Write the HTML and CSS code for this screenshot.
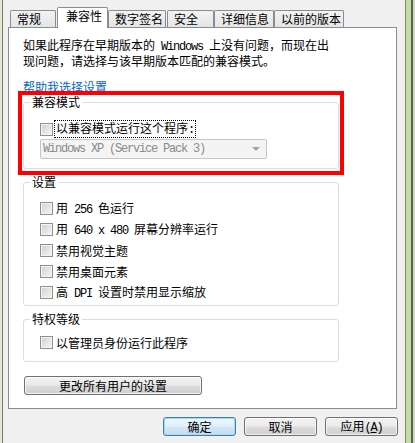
FILE: index.html
```html
<!DOCTYPE html>
<html lang="zh-CN">
<head>
<meta charset="utf-8">
<title>属性 - 兼容性</title>
<link rel="stylesheet" href="styles.css">
</head>
<body>
<div class="win">
  <div class="frame-l"></div>
  <div class="main">
    <div class="tabs">
      <div class="tab t1">常规</div>
      <div class="tab sel t2">兼容性</div>
      <div class="tab t3">数字签名</div>
      <div class="tab t4">安全</div>
      <div class="tab t5">详细信息</div>
      <div class="tab t6">以前的版本</div>
    </div>
    <div class="panel">
      <p class="desc">如果此程序在早期版本的<span class="m"> Windows </span>上没有问题，而现在出<br>现问题，请选择与该早期版本匹配的兼容模式。</p>
      <a class="link">帮助我选择设置</a>
      <fieldset class="group g1">
        <legend>兼容模式</legend>
        <div class="gbody">
          <div class="row r16"><span class="cb"></span><span class="focus">以兼容模式运行这个程序<span class="m">:</span></span></div>
          <div class="select"><span class="m">Windows XP (Service Pack 3)</span><span class="arrow"></span></div>
        </div>
      </fieldset>
      <fieldset class="group g2">
        <legend>设置</legend>
        <div class="gbody">
          <div class="row"><span class="cb"></span><span>用<span class="m"> 256 </span>色运行</span></div>
          <div class="row"><span class="cb"></span><span>用<span class="m"> 640 x 480 </span>屏幕分辨率运行</span></div>
          <div class="row"><span class="cb"></span><span>禁用视觉主题</span></div>
          <div class="row"><span class="cb"></span><span>禁用桌面元素</span></div>
          <div class="row"><span class="cb"></span><span>高<span class="m"> DPI </span>设置时禁用显示缩放</span></div>
        </div>
      </fieldset>
      <fieldset class="group g3">
        <legend>特权等级</legend>
        <div class="gbody">
          <div class="row"><span class="cb"></span><span>以管理员身份运行此程序</span></div>
        </div>
      </fieldset>
      <button class="btn wide">更改所有用户的设置</button>
    </div>
    <div class="actions">
      <button class="btn def">确定</button>
      <button class="btn">取消</button>
      <button class="btn">应用<span class="m">(<u>A</u>)</span></button>
    </div>
  </div>
  <div class="frame-r"></div>
</div>
<div class="redbox"></div>
</body>
</html>
```
FILE: styles.css
```css
html, body {
  margin: 0;
  padding: 0;
}
body {
  width: 415px;
  height: 443px;
  overflow: hidden;
  background: #f0f0f0;
  font-family: "Noto Sans CJK SC", "Noto Sans", sans-serif;
  font-size: 12px;
  line-height: 14px;
  color: #000;
  position: relative;
}
.m {
  font-family: "Liberation Mono", monospace;
  font-size: 12px;
  letter-spacing: -1.2px;
  white-space: pre;
}
.win {
  display: flex;
  width: 415px;
  height: 443px;
}
.frame-l {
  width: 3px;
  flex: none;
  background: linear-gradient(to right, #e4e8dc 0, #e4e8dc 2px, #6b8150 2px, #6b8150 3px);
}
.frame-r {
  width: 10px;
  flex: none;
  background: linear-gradient(to right,
    #7c8a6b 0, #7c8a6b 1px,
    #c6dca6 1px, #c6dca6 6px,
    #56644b 6px, #56644b 8px,
    #d3d9c8 8px, #d3d9c8 10px);
}
.main {
  width: 402px;
  flex: none;
  padding: 7px 0 0 5px;
  box-sizing: border-box;
}
.tabs {
  display: flex;
  align-items: flex-end;
  height: 20px;
  padding-left: 2px;
}
.tab {
  box-sizing: border-box;
  height: 17px;
  border: 1px solid #898c95;
  border-bottom: none;
  border-radius: 2px 2px 0 0;
  background: linear-gradient(#f3f3f3, #e4e4e4);
  padding: 1px 0 0 6px;
  white-space: nowrap;
}
.tab.sel {
  position: relative;
  height: 21px;
  margin-bottom: -1px;
  background: #fff;
  padding: 1px 0 0 8px;
}
.t1 { width: 46px; }
.t2 { width: 51px; margin-left: 1px; }
.t3 { width: 58px; }
.t4 { width: 47px; margin-left: 1px; }
.t5 { width: 60px; }
.t6 { width: 70px; }

.panel {
  box-sizing: border-box;
  width: 389px;
  height: 382px;
  border: 1px solid #898c95;
  background: #fff;
  padding: 10px 0 0 14px;
}
.desc {
  margin: 0;
  white-space: nowrap;
}
.link {
  display: block;
  margin-top: 12px;
  color: #0066cc;
  text-decoration: none;
  width: max-content;
}
.group {
  box-sizing: border-box;
  width: 316px;
  margin: 1px 0 0 0;
  min-width: 0;
  border: 1px solid #d5dfe5;
  border-radius: 3px;
  padding: 0 0 9px 6px;
}
.group legend {
  padding: 0 2px;
  line-height: 14px;
}
.gbody {
  padding-left: 10px;
}
.g1 .gbody { padding-top: 12px; }
.g2 { margin-top: 6px; padding-bottom: 2px; }
.g2 .gbody { padding-top: 9px; }
.g3 { margin-top: 6px; padding-bottom: 8px; }
.g3 .gbody { padding-top: 6px; }

.row {
  display: flex;
  align-items: center;
  height: 21px;
  white-space: nowrap;
}
.row.r16 { height: 16px; }
.cb {
  box-sizing: border-box;
  width: 13px;
  height: 13px;
  flex: none;
  margin-right: 3px;
  border: 1px solid #8e8f8f;
  background: linear-gradient(135deg, #cdd0d4, #f6f6f6);
  box-shadow: inset 0 0 0 1px #f4f4f4;
}
.focus {
  outline: 1px dotted #000;
  line-height: 13px;
  margin-left: -1px;
  padding: 0 1px;
}
.select {
  box-sizing: border-box;
  width: 227px;
  height: 20px;
  margin-top: 2px;
  border: 1px solid #c6c6c6;
  border-radius: 2px;
  background: #f4f4f4;
  color: #8a8a8a;
  display: flex;
  align-items: center;
  justify-content: space-between;
  padding: 0 6px 0 2px;
}
.arrow {
  width: 0;
  height: 0;
  border-left: 4px solid transparent;
  border-right: 4px solid transparent;
  border-top: 4px solid #a4a4a4;
}

.btn {
  box-sizing: border-box;
  height: 19px;
  padding: 0;
  margin: 0;
  font-family: inherit;
  font-size: 12px;
  line-height: 16px;
  color: #000;
  border: 1px solid #707070;
  border-radius: 3px;
  background: linear-gradient(#f2f2f2 0, #ebebeb 48%, #dddddd 52%, #cfcfcf 100%);
  box-shadow: inset 0 0 0 1px rgba(255,255,255,0.7);
}
.btn.wide {
  display: block;
  width: 178px;
  margin: 14px 0 0 1px;
}
.actions {
  display: flex;
  justify-content: flex-end;
  gap: 8px;
  margin-top: 8px;
  padding-right: 7px;
}
.actions .btn {
  width: 73px;
}
.btn.def {
  border-color: #3c7fb1;
  background: linear-gradient(#eef6fc 0, #e3f0fa 48%, #d3e6f5 52%, #c4dcee 100%);
  box-shadow: inset 0 0 0 1px #a9d7f5;
}
.redbox {
  position: absolute;
  left: 18px;
  top: 91px;
  width: 326px;
  height: 84px;
  box-sizing: border-box;
  border: 4px solid #ff0000;
}
```
